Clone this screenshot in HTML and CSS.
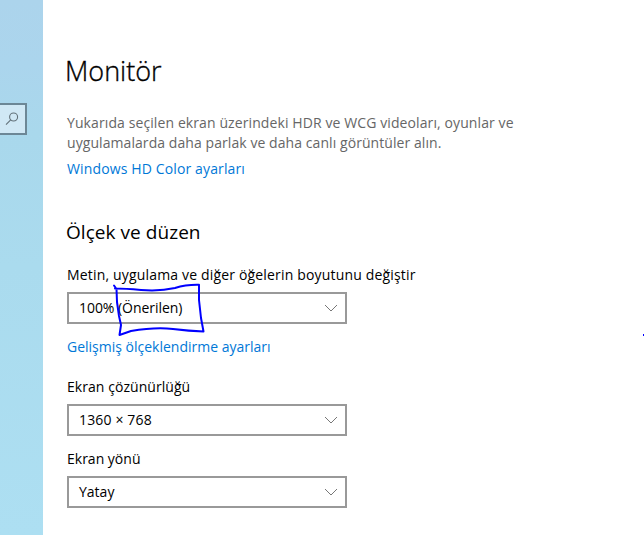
FILE: index.html
```html
<!DOCTYPE html>
<html lang="tr">
    <head>
        <meta charset="UTF-8">
        <meta name="viewport" content="width=device-width, initial-scale=1.0">
        <title>Monitör</title>
        <link rel="stylesheet" href="styles.css">
    </head>
    <body>
        <div class="container">
            <div class="sidebar">
                <div class="search">
                    <svg width="14" height="14" viewBox="0 0 14 14">
                        <circle cx="8.6" cy="5" r="4" />
                        <path d="M5.7 7.9L1 12.6" />
                    </svg>
                </div>
            </div>
            <div class="content">
                <h1>Monitör</h1>
                <p class="info"><span class="line1">Yukarıda seçilen ekran üzerindeki HDR ve WCG videoları, oyunlar ve</span><br><span class="line2">uygulamalarda daha parlak ve daha canlı görüntüler alın.</span></p>
                <a href="#" class="color-link">Windows HD Color ayarları</a>

                <h2>Ölçek ve düzen</h2>
                <label class="scale-label">Metin, uygulama ve diğer öğelerin boyutunu değiştir</label>
                <div class="select">
                    <span class="scale-value">100% (Önerilen)</span>
                    <svg class="arrow" width="14" height="8" viewBox="0 0 14 8"><path d="M1 1L7 7L13 1" /></svg>
                    <!-- kalemle çizilen çerçeve -->
                    <svg class="mark" width="92" height="54" viewBox="0 0 92 54">
                        <path d="M1 1.500L3.500 5L4 18L6 32L8 41L6.500 51L18 47Q42 43 60 45Q76 47 90.500 47.500L88 34L86 16V0.800Q73 0.500 62 4Q47 7.500 28 6Q12 4.500 2 4.500" />
                    </svg>
                </div>
                <a href="#" class="scale-link">Gelişmiş ölçeklendirme ayarları</a>

                <label class="res-label">Ekran çözünürlüğü</label>
                <div class="select">
                    <span class="res-value">1360 × 768</span>
                    <svg class="arrow" width="14" height="8" viewBox="0 0 14 8"><path d="M1 1L7 7L13 1" /></svg>
                </div>
                <label class="dir-label">Ekran yönü</label>
                <div class="select">
                    <span class="dir-value">Yatay</span>
                    <svg class="arrow" width="14" height="8" viewBox="0 0 14 8"><path d="M1 1L7 7L13 1" /></svg>
                </div>
            </div>
        </div>
        <div class="dot"></div>
    </body>
</html>
```
FILE: styles.css
```css
body{
    margin: 0;
    background-color: white;
    color: black;
    font-family: "Open Sans", "Noto Sans", sans-serif;
    font-size: 14px;
    line-height: 20px;
    overflow: hidden;
}
.container{
    display: flex;
    height: 535px;
}
.sidebar{
    box-sizing: border-box;
    width: 43px;
    padding-top: 103px;
    background: linear-gradient(#acd4ec 0%, #abd5ed 12%, #a9d8ec 25%, #aadbee 50%, #addff2 100%);
}
.search{
    box-sizing: border-box;
    width: 27px;
    height: 32px;
    border: 2px solid #6c8796;
    border-left: none;
    background-color: #d0e8f5;
    padding: 7px 0 0 5px;
}
.search svg{
    display: block;
    fill: none;
    stroke: #627179;
    stroke-width: 1.1;
}
.content{
    display: flex;
    flex-direction: column;
    align-items: flex-start;
    padding: 53px 0 0 24px;
    white-space: nowrap;
}
h1, h2, p{
    margin: 0;
    font-weight: normal;
}
h1{
    font-size: 27px;
    font-weight: 300;
    line-height: 36px;
    margin-left: -2px;
    -webkit-text-stroke: 0.35px black;
}
h2{
    font-size: 19px;
    line-height: 26px;
    margin-top: 40px;
    margin-left: -1px;
    letter-spacing: 0.05px;
}
.info{
    margin-top: 24px;
    color: #666666;
}
.line1{
    letter-spacing: 0.1px;
}
.line2{
    letter-spacing: 0.07px;
}
a{
    color: #0078d7;
    text-decoration: none;
}
.color-link{
    margin-top: 6px;
    letter-spacing: 0.13px;
}
.scale-label{
    margin-top: 20px;
    letter-spacing: 0.17px;
}
.select{
    position: relative;
    box-sizing: border-box;
    display: flex;
    align-items: center;
    justify-content: space-between;
    width: 280px;
    height: 32px;
    margin-top: 7px;
    padding: 0 7px 0 10px;
    border: 2px solid #999999;
}
.arrow{
    fill: none;
    stroke: #777777;
}
.scale-value{
    letter-spacing: -0.05px;
}
.res-value{
    letter-spacing: 0.15px;
}
.scale-link{
    margin-top: 13px;
}
.res-label{
    margin-top: 20px;
    letter-spacing: 0.05px;
}
.dir-label{
    margin-top: 13px;
}
.mark{
    position: absolute;
    left: 44px;
    top: -10px;
    overflow: visible;
    fill: none;
    stroke: #0000ff;
    stroke-width: 2;
    stroke-linecap: round;
    stroke-linejoin: round;
}
.dot{
    position: absolute;
    right: 0;
    top: 334px;
    width: 1px;
    height: 2px;
    background-color: #0000ff;
}
```
